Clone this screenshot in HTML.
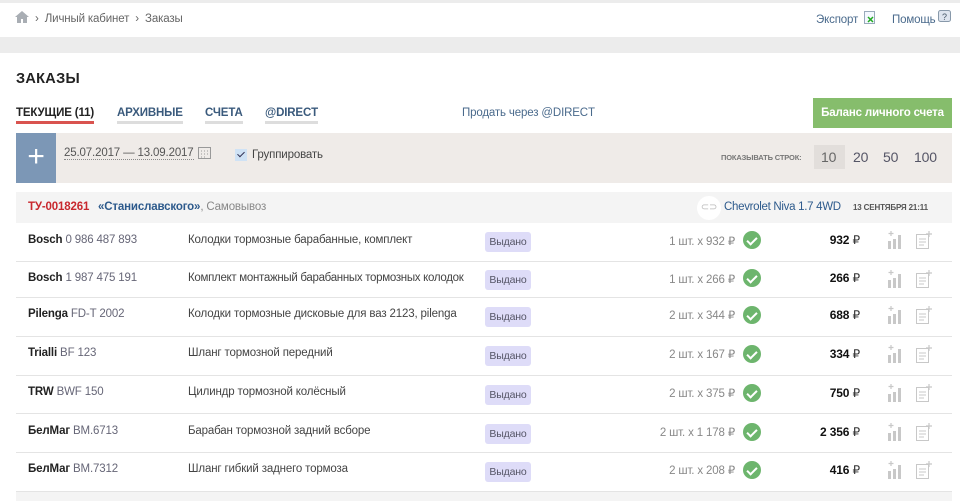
<!DOCTYPE html>
<html><head><meta charset="utf-8"><style>
*{margin:0;padding:0;box-sizing:border-box}
body{width:960px;height:501px;overflow:hidden;background:#fff;font-family:"Liberation Sans",Arial,sans-serif;font-size:11.5px;color:#333;position:relative;letter-spacing:-.15px}
.a{position:absolute;white-space:nowrap}
.top{left:0;top:0;width:960px;height:3px;background:#ececec}
.band{left:0;top:37px;width:960px;height:16px;background:#ececec}
.tab{font-weight:bold;font-size:11.5px;color:#3a5a7c;border-bottom:3px solid #ddd;padding-bottom:2px;top:107px}
.row{left:16px;width:936px;height:39px;border-bottom:1px solid #e4e4e4}
.br{left:28px;color:#222;font-weight:bold}
.br span{font-weight:normal;color:#667}
.ds{left:188px;color:#444}
.bd{left:485px;width:46px;height:20px;background:#dedcf8;border-radius:3px;font-size:10.5px;color:#556;text-align:center;line-height:20px}
.q{right:225px;color:#888}
.ck{left:743px;width:18px;height:18px;border-radius:50%;background:#6db56d}
.ck:after{content:"";position:absolute;left:6px;top:3.5px;width:4px;height:8px;border:solid #fff;border-width:0 2.5px 2.5px 0;transform:rotate(45deg)}
.t{right:100px;font-weight:bold;color:#111;font-size:12px}
.t span{font-weight:normal;color:#333}
</style></head><body>
<div class="a top"></div>
<svg class="a" style="left:15px;top:11px" width="14" height="12" viewBox="0 0 14 12"><path d="M7 0L0 6h2v6h4V8h2v4h4V6h2z" fill="#a9aeb4"/></svg>
<div class="a" style="left:35px;top:13px;color:#666">›&nbsp; Личный кабинет &nbsp;›&nbsp; Заказы</div>
<div class="a" style="left:816px;top:14px;color:#4a6a8c">Экспорт</div>
<svg class="a" style="left:864px;top:11px" width="12" height="13"><rect x=".5" y=".5" width="10" height="12" fill="#f4f8ff" stroke="#9ab"/><path d="M4 6l5 5M9 6l-5 5" stroke="#2a2" stroke-width="1.5"/></svg>
<div class="a" style="left:892px;top:14px;color:#4a6a8c">Помощь</div>
<svg class="a" style="left:938px;top:10px" width="13" height="13"><rect x=".5" y=".5" width="12" height="11" rx="2" fill="#dde4ee" stroke="#8899aa"/><text x="4" y="10" font-size="9" fill="#456">?</text></svg>
<div class="a band"></div>
<div class="a" style="left:16px;top:71px;font-size:14.5px;font-weight:bold;color:#222;letter-spacing:.3px">ЗАКАЗЫ</div>
<div class="a tab" style="left:16px;color:#222;border-color:#d9534f">ТЕКУЩИЕ (11)</div>
<div class="a tab" style="left:117px">АРХИВНЫЕ</div>
<div class="a tab" style="left:205px">СЧЕТА</div>
<div class="a tab" style="left:265px">@DIRECT</div>
<div class="a" style="left:462px;top:107px;color:#4a6a8c">Продать через @DIRECT</div>
<div class="a" style="left:813px;top:98px;width:139px;height:30px;background:#86bd6c;color:#fff;font-weight:bold;text-align:center;line-height:30px">Баланс личного счета</div>
<div class="a" style="left:16px;top:133px;width:936px;height:50px;background:#efebe8"></div>
<div class="a" style="left:16px;top:133px;width:40px;height:50px;background:#7c97b6;color:#fff;font-size:30px;text-align:center;line-height:48px;font-weight:300">+</div>
<div class="a" style="left:64px;top:147px;color:#555;border-bottom:1px dotted #888">25.07.2017 — 13.09.2017</div>
<svg class="a" style="left:198px;top:146px" width="13" height="13"><rect x=".5" y="1.5" width="12" height="11" fill="none" stroke="#999"/><path d="M3 5h1M6 5h1M9 5h1M3 8h1M6 8h1M9 8h1M3 11h1M6 11h1" stroke="#999"/></svg>
<div class="a" style="left:235px;top:149px;width:12px;height:12px;background:#cfe2f5"></div>
<div class="a" style="left:239px;top:150px;width:4px;height:7px;border:solid #335;border-width:0 1.5px 1.5px 0;transform:rotate(45deg)"></div>
<div class="a" style="left:252px;top:149px;color:#444">Группировать</div>
<div class="a" style="left:721px;top:153px;font-size:7.5px;color:#777;font-weight:bold">ПОКАЗЫВАТЬ СТРОК:</div>
<div class="a" style="left:814px;top:145px;width:31px;height:24px;background:#e2dedb"></div>
<div class="a" style="left:821px;top:149px;font-size:14px;color:#666">10</div>
<div class="a" style="left:853px;top:149px;font-size:14px;color:#556">20</div>
<div class="a" style="left:883px;top:149px;font-size:14px;color:#556">50</div>
<div class="a" style="left:914px;top:149px;font-size:14px;color:#556">100</div>
<div class="a" style="left:16px;top:192px;width:936px;height:31px;background:#f4f4f4"></div>
<div class="a" style="left:28px;top:201px;color:#c8282e;font-weight:bold">ТУ-0018261</div>
<div class="a" style="left:98px;top:201px;color:#888"><b style="color:#2d5a8c">«Станиславского»</b>, Самовывоз</div>
<div class="a" style="left:697px;top:196px;width:24px;height:24px;border-radius:50%;background:#fff;color:#bbb;text-align:center;line-height:24px;font-size:10px">⊂⊃</div>
<div class="a" style="left:724px;top:201px;color:#2d5a8c;font-size:11.5px;letter-spacing:-.3px">Chevrolet Niva 1.7 4WD</div>
<div class="a" style="left:853px;top:203px;font-size:8px;font-weight:bold;color:#555">13 СЕНТЯБРЯ 21:11</div>

<div class="a row" style="top:223px"></div>
<div class="a row" style="top:262px;height:36px"></div>
<div class="a row" style="top:298px"></div>
<div class="a row" style="top:337px"></div>
<div class="a row" style="top:376px;height:38px"></div>
<div class="a row" style="top:414px"></div>
<div class="a row" style="top:453px"></div>
<div class="a" style="left:16px;top:492px;width:936px;height:9px;background:#f4f4f4"></div>

<div class="a br" style="top:234px">Bosch <span>0 986 487 893</span></div><div class="a ds" style="top:234px">Колодки тормозные барабанные, комплект</div><div class="a bd" style="top:232px">Выдано</div><div class="a q" style="top:234px">1 шт. x 932 ₽</div><div class="a ck" style="top:231px"></div><div class="a t" style="top:233px">932 <span>₽</span></div>
<div class="a br" style="top:272px">Bosch <span>1 987 475 191</span></div><div class="a ds" style="top:272px;letter-spacing:-.3px">Комплект монтажный барабанных тормозных колодок</div><div class="a bd" style="top:270px">Выдано</div><div class="a q" style="top:272px">1 шт. x 266 ₽</div><div class="a ck" style="top:269px"></div><div class="a t" style="top:271px">266 <span>₽</span></div>
<div class="a br" style="top:308px">Pilenga <span>FD-T 2002</span></div><div class="a ds" style="top:308px">Колодки тормозные дисковые для ваз 2123, pilenga</div><div class="a bd" style="top:307px">Выдано</div><div class="a q" style="top:308px">2 шт. x 344 ₽</div><div class="a ck" style="top:306px"></div><div class="a t" style="top:308px">688 <span>₽</span></div>
<div class="a br" style="top:347px">Trialli <span>BF 123</span></div><div class="a ds" style="top:347px">Шланг тормозной передний</div><div class="a bd" style="top:346px">Выдано</div><div class="a q" style="top:347px">2 шт. x 167 ₽</div><div class="a ck" style="top:345px"></div><div class="a t" style="top:347px">334 <span>₽</span></div>
<div class="a br" style="top:386px">TRW <span>BWF 150</span></div><div class="a ds" style="top:386px">Цилиндр тормозной колёсный</div><div class="a bd" style="top:385px">Выдано</div><div class="a q" style="top:386px">2 шт. x 375 ₽</div><div class="a ck" style="top:384px"></div><div class="a t" style="top:386px">750 <span>₽</span></div>
<div class="a br" style="top:425px">БелМаг <span>BM.6713</span></div><div class="a ds" style="top:425px">Барабан тормозной задний всборе</div><div class="a bd" style="top:424px">Выдано</div><div class="a q" style="top:425px">2 шт. x 1 178 ₽</div><div class="a ck" style="top:423px"></div><div class="a t" style="top:425px">2 356 <span>₽</span></div>
<div class="a br" style="top:463px">БелМаг <span>BM.7312</span></div><div class="a ds" style="top:463px">Шланг гибкий заднего тормоза</div><div class="a bd" style="top:462px">Выдано</div><div class="a q" style="top:463px">2 шт. x 208 ₽</div><div class="a ck" style="top:461px"></div><div class="a t" style="top:463px">416 <span>₽</span></div>

<svg class="a" style="left:886px;top:228px" width="50" height="260">
<defs><g id="ic" fill="none" stroke="#c8c8c8"><path d="M5 0v5M2.5 2.5h5" stroke-width="1.2"/><rect x="2" y="10" width="3" height="8" fill="#c8c8c8" stroke="none"/><rect x="7" y="8" width="3" height="10" fill="#c8c8c8" stroke="none"/><rect x="12" y="4" width="3" height="14" fill="#c8c8c8" stroke="none"/><rect x="30.5" y="3.5" width="12" height="14"/><path d="M33 8h7M33 11h7M33 14h5"/><path d="M43 0v6M40 3h6" stroke-width="1.2"/></g></defs>
<use href="#ic" y="3"/><use href="#ic" y="42"/><use href="#ic" y="78"/><use href="#ic" y="117"/><use href="#ic" y="156"/><use href="#ic" y="195"/><use href="#ic" y="233"/>
</svg>
</body></html>
